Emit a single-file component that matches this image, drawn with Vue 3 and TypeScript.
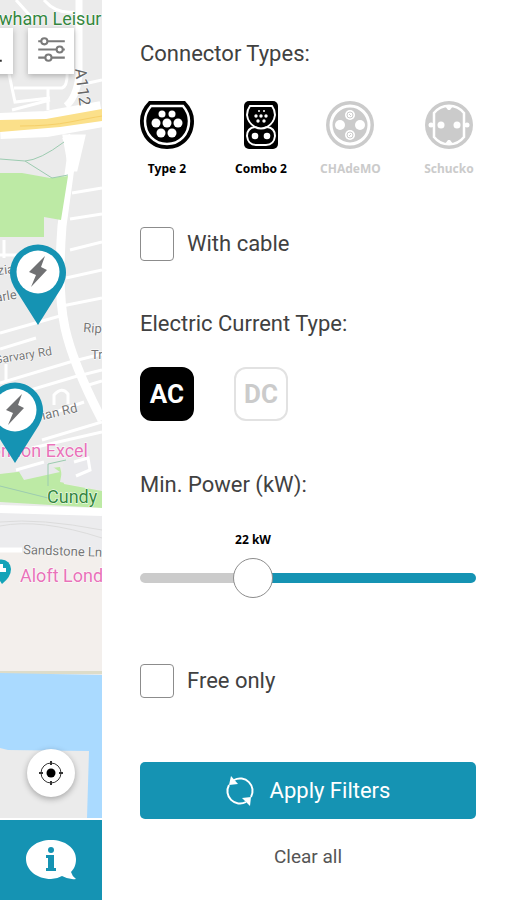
<script setup lang="ts">
import { computed, ref } from 'vue'

type Connector = 'type2' | 'combo2' | 'chademo' | 'schucko'
type Current = 'AC' | 'DC'

const connectors: { id: Connector; label: string }[] = [
  { id: 'type2', label: 'Type 2' },
  { id: 'combo2', label: 'Combo 2' },
  { id: 'chademo', label: 'CHAdeMO' },
  { id: 'schucko', label: 'Schucko' },
]
const currents: Current[] = ['AC', 'DC']

const activeConnectors = ref<Connector[]>(['type2', 'combo2'])
const activeCurrents = ref<Current[]>(['AC'])
const withCable = ref(false)
const freeOnly = ref(false)
const maxPower = 70
const power = ref(22)

const fraction = computed(() => power.value / maxPower)
const sliderVars = computed(() => ({ '--fraction': String(fraction.value) }))

function toggle<T>(list: T[], item: T): T[] {
  return list.includes(item) ? list.filter((entry) => entry !== item) : [...list, item]
}

function clearAll() {
  activeConnectors.value = []
  activeCurrents.value = []
  withCable.value = false
  freeOnly.value = false
  power.value = 0
}
</script>

<template>
  <div class="app">
    <div class="side">
      <div class="map">
        <svg class="map-art" viewBox="0 0 102 818" preserveAspectRatio="xMinYMin slice" aria-hidden="true">
          <rect width="102" height="818" fill="#ebebeb" />
          <g fill="none" stroke="#fff" stroke-width="3">
            <path d="M16 0L34 20M44 0Q56 14 74 12M9 74L15 102L50 98M14 88H62Q68 86 67 70M48 88V110M84 84L102 80M12 110L50 100" />
            <path d="M79 0V76Q76 98 66 106" stroke-width="7" />
            <path d="M0 126L46 124L102 114" stroke-width="26" />
            <path d="M66 136Q72 146 71 160L62 226Q57 292 65 328T102 420" stroke-width="9" />
            <path d="M64 136H84L76 170H70Z" fill="#fff" />
            <path d="M72 193L102 188M70 219L102 214M0 255H40M70 250L102 242M66 278L102 270M62 306L102 298M0 333L60 316M0 349L36 338M0 383L70 362L102 354M0 399L74 377L102 370M82 387L102 381M42 417L84 402M42 440L102 422M54 405V395Q62 386 68 394V404M4 240V258M6 364V380M32 448L102 432" />
          </g>
          <path d="M0 120L46 119L102 109V121L60 127L0 132Z" fill="#fbe08a" />
          <path d="M20 126Q50 126 70 122T102 116" fill="none" stroke="#f6cf68" />
          <path d="M0 173H22L50 178L68 176L61 220L44 217V237H0Z" fill="#bdeaa5" />
          <g fill="none" stroke="#9ccbb0">
            <path d="M0 159L25 161Q40 160 64 142M25 161L52 178L68 175" />
          </g>
          <path d="M0 474L60 467L64 484L102 491V508L0 502Z" fill="#bdeaa5" />
          <path d="M18 470L46 462L60 472L24 480Z" fill="#e9e9ec" />
          <path d="M64 460H102V490L60 482Z" fill="#e9e9ec" />
          <path d="M74 462L88 458L90 470L76 476M16 470L44 462" fill="none" stroke="#fff" stroke-width="3" />
          <path d="M0 486L48 498M48 464V486M48 464L66 460" fill="none" stroke="#9ccbb0" />
          <path d="M0 513H102V552H0Z" fill="#ececee" />
          <path d="M0 509L102 512" stroke="#fff" stroke-width="8" />
          <path d="M0 526Q40 518 102 538M0 522Q40 518 102 530" fill="none" stroke="#dcdcdc" />
          <path d="M0 552H102V671H0Z" fill="#f3efec" />
          <path d="M0 550H22" stroke="#fff" stroke-width="5" />
          <path d="M0 671H102V674H0Z" fill="#dddcc9" />
          <path d="M0 673L102 675V818H0Z" fill="#aadaff" />
          <path d="M0 748L8 750L89 751L87 818H0Z" fill="#ebebeb" />

          <g class="map-text">
            <text x="-1" y="25" class="park">wham Leisur</text>
            <text transform="translate(75 69) rotate(83)" class="road">A112</text>
            <text transform="translate(-2 275) rotate(-6)" class="street">zia</text>
            <text transform="translate(-4 302) rotate(-9)" class="street">arle</text>
            <text transform="translate(-5 364) rotate(-9)" class="street small">Garvary Rd</text>
            <text transform="translate(83 332) rotate(4)" class="street">Rip</text>
            <text x="91" y="359" class="street">Tr</text>
            <text transform="translate(43 420) rotate(-13)" class="street">ian Rd</text>
            <text x="88" y="457" text-anchor="end" class="place">London Excel</text>
            <text x="47" y="503" class="park">Cundy</text>
            <text transform="translate(23 554) rotate(2)" class="street">Sandstone Ln</text>
            <text x="20" y="582" class="place">Aloft Lond</text>
          </g>

          <path d="M-8 569A9.500 9.500 0 0 1 11 569Q11 577 2 584Z" fill="#13a3b8" />
          <path d="M0 564H3V568H6V572H0Z" fill="#fff" />

          <g v-for="[x, y] in [[38, 272], [15, 410]]" :key="y" :transform="`translate(${x} ${y})`">
            <path d="M0 53L-24 15A28 28 0 1 1 24 15Z" fill="#1593b3" />
            <circle r="21.500" fill="#fff" />
            <path d="M7 -16L-9 0L-2 3L-7 15L9 -2L3 -5Z" fill="#707173" />
          </g>
        </svg>

        <div class="map-tools">
          <button class="tool" type="button" aria-label="Search">
            <svg viewBox="0 0 45 45"><path d="M28 32H34" stroke="#333" stroke-width="2" /></svg>
          </button>
          <button class="tool" type="button" aria-label="Filters">
            <svg viewBox="0 0 45 45" fill="#fff" stroke="#7a7a7a" stroke-width="2">
              <path d="M10 13H36M10 21H36M10 29H36" />
              <circle cx="16" cy="13" r="3" />
              <circle cx="31" cy="21" r="3" />
              <circle cx="20" cy="29" r="3" />
            </svg>
          </button>
        </div>

        <button class="locate" type="button" aria-label="My location">
          <svg viewBox="0 0 26 26" fill="none" stroke="#333">
            <circle cx="13" cy="13" r="10" />
            <path d="M13 1V5M13 21V25M1 13H5M21 13H25" stroke-width="2" />
            <circle cx="13" cy="13" r="4.500" fill="#000" stroke="none" />
          </svg>
        </button>
      </div>

      <nav class="tabs">
        <button class="info" type="button" aria-label="Information">
          <svg viewBox="0 0 52 42">
            <path d="M26 1C40 1 51 9 51 20C51 26 49 30 46 33Q47 37 51 40Q44 41 37 37Q32 40 26 40C12 40 1 31 1 20S12 1 26 1Z" fill="#fff" />
            <circle cx="26" cy="11" r="3" fill="#1593b3" />
            <path d="M21 16H29V29H31V32H21V29H23V19H21Z" fill="#1593b3" />
          </svg>
        </button>
      </nav>
    </div>

    <form class="panel" @submit.prevent>
      <h2>Connector Types:</h2>
      <div class="connectors">
        <button
          v-for="item in connectors"
          :key="item.id"
          type="button"
          class="connector"
          :class="{ active: activeConnectors.includes(item.id) }"
          :aria-pressed="activeConnectors.includes(item.id)"
          @click="activeConnectors = toggle(activeConnectors, item.id)"
        >
          <svg v-if="item.id === 'type2'" width="54" height="48" viewBox="0 0 54 48" fill="currentColor">
            <path d="M9 0H45Q54 9 54 20C54 36 43 48 27 48S0 36 0 20Q0 9 9 0Z" />
            <path d="M11 5H43Q49 12 49 20C49 33 40 43 27 43S5 33 5 20Q5 12 11 5Z" fill="none" stroke="#fff" stroke-width="2.500" />
            <g fill="#fff">
              <circle cx="22" cy="13" r="3.500" /><circle cx="32" cy="13" r="3.500" />
              <circle cx="16" cy="22" r="4.500" /><circle cx="27" cy="22" r="4.500" /><circle cx="38" cy="22" r="4.500" />
              <circle cx="21" cy="32" r="4.500" /><circle cx="32" cy="32" r="4.500" />
            </g>
          </svg>
          <svg v-else-if="item.id === 'combo2'" width="34" height="48" viewBox="0 0 34 48" fill="currentColor">
            <rect width="34" height="48" rx="5" />
            <g fill="none" stroke="#fff" stroke-width="2">
              <path d="M6 5H28Q31 9 31 14Q30 22 23 26Q31 27 31 35Q30 44 22 44H12Q4 44 3 35Q3 27 11 26Q4 22 3 14Q3 9 6 5Z" />
              <path d="M11 26Q17 29 23 26" />
            </g>
            <g fill="#fff">
              <circle cx="15" cy="10" r="1" /><circle cx="20" cy="10" r="1" />
              <circle cx="12" cy="15" r="1.700" /><circle cx="17" cy="15" r="1.700" /><circle cx="22" cy="15" r="1.700" />
              <circle cx="14" cy="20" r="1.700" /><circle cx="20" cy="20" r="1.700" />
              <circle cx="11" cy="35" r="3.300" /><circle cx="23" cy="35" r="3.300" />
            </g>
          </svg>
          <svg v-else-if="item.id === 'chademo'" width="48" height="48" viewBox="0 0 48 48" fill="currentColor">
            <circle cx="24" cy="24" r="24" />
            <circle cx="24" cy="24" r="19" fill="none" stroke="#fff" stroke-width="3" />
            <g fill="#fff">
              <circle cx="14" cy="24" r="5" /><circle cx="34" cy="24" r="5" />
              <circle cx="24" cy="14" r="5" /><circle cx="24" cy="34" r="5" />
            </g>
            <g fill="none" stroke="currentColor">
              <circle cx="24" cy="14" r="3" /><circle cx="24" cy="34" r="3" />
              <path d="M23 13L25 15M23 35L25 33" />
            </g>
          </svg>
          <svg v-else width="48" height="48" viewBox="0 0 48 48" fill="currentColor">
            <circle cx="24" cy="24" r="24" />
            <path d="M9 12A19 19 0 0 1 39 12V36A19 19 0 0 1 9 36Z" fill="none" stroke="#fff" stroke-width="2.500" />
            <g fill="#fff">
              <circle cx="16" cy="24" r="3.500" /><circle cx="32" cy="24" r="3.500" />
              <circle cx="6" cy="24" r="2.500" /><circle cx="42" cy="24" r="2.500" />
              <path d="M20 5H28L25 9H23ZM20 43H28L25 39H23Z" />
            </g>
          </svg>
          <span>{{ item.label }}</span>
        </button>
      </div>

      <label class="check cable">
        <input v-model="withCable" type="checkbox" />
        <span>With cable</span>
      </label>

      <h2>Electric Current Type:</h2>
      <div class="currents">
        <button
          v-for="kind in currents"
          :key="kind"
          type="button"
          class="current"
          :class="{ active: activeCurrents.includes(kind) }"
          :aria-pressed="activeCurrents.includes(kind)"
          @click="activeCurrents = toggle(activeCurrents, kind)"
        >
          {{ kind }}
        </button>
      </div>

      <h2><label for="power">Min. Power (kW):</label></h2>
      <div class="slider" :style="sliderVars">
        <output for="power"><span>{{ power }} kW</span></output>
        <input id="power" v-model.number="power" type="range" min="0" :max="maxPower" />
      </div>

      <label class="check free">
        <input v-model="freeOnly" type="checkbox" />
        <span>Free only</span>
      </label>

      <button class="apply" type="submit">
        <svg viewBox="0 0 28 28" fill="none" stroke="#fff" stroke-width="2">
          <path d="M8 3A12.500 12.500 0 0 1 25 20M20 25A12.500 12.500 0 0 1 3 8" />
          <path d="M5 -1L3 8L12 7ZM16 21L25 20L24 29Z" fill="#fff" stroke="none" />
        </svg>
        <span>Apply Filters</span>
      </button>
      <button class="clear" type="button" @click="clearAll">Clear all</button>
    </form>
  </div>
</template>

<style>
body {
  margin: 0;
  background: #fff;
}
</style>

<style scoped>
.app {
  display: flex;
  min-height: 100vh;
  font-family: Roboto, sans-serif;
  color: #414141;
}

button {
  padding: 0;
  border: 0;
  font-family: inherit;
  cursor: pointer;
}

svg {
  display: block;
}

.side {
  display: flex;
  flex: 0 0 102px;
  flex-direction: column;
}

.map {
  position: relative;
  flex: 1;
  overflow: hidden;
}

.map-art {
  position: absolute;
  width: 100%;
  height: 100%;
}

.park {
  fill: #35873f;
  font-size: 18px;
}

.place {
  fill: #e973b9;
  font-size: 18px;
}

.road {
  fill: #666;
  font-size: 16px;
}

.street {
  fill: #777;
  font-size: 13px;
}

.street.small {
  font-size: 12px;
}

.map-text text {
  paint-order: stroke;
  stroke: #fff;
  stroke-width: 1px;
}

.map-tools {
  position: absolute;
  top: 28px;
  right: 28px;
  display: flex;
  gap: 15px;
}

.tool {
  width: 46px;
  height: 46px;
  background: #fff;
  box-shadow: 0 2px 6px rgba(0, 0, 0, 0.25);
}

.locate {
  position: absolute;
  right: 27px;
  bottom: 21px;
  display: grid;
  place-items: center;
  width: 48px;
  height: 48px;
  border-radius: 50%;
  background: #fff;
  box-shadow: 0 2px 6px rgba(0, 0, 0, 0.3);
}

.locate svg {
  width: 26px;
}

.tabs {
  display: grid;
  place-items: center;
  height: 80px;
  border-top: 2px solid #fff;
  background: #1593b3;
}

.info {
  background: none;
}

.info svg {
  width: 52px;
}

.panel {
  display: flex;
  flex: 1;
  flex-direction: column;
  min-width: 0;
  padding: 41px 30px 28px 38px;
  background: #fff;
}

h2 {
  margin: 0;
  font-size: 22px;
  font-weight: 400;
  line-height: 26px;
}

.connectors {
  display: grid;
  grid-template-columns: 94fr 86fr 102fr 54px;
  justify-items: start;
  margin-top: 34px;
}

.connector {
  display: flex;
  flex-direction: column;
  align-items: center;
  gap: 12px;
  min-width: 54px;
  background: none;
  color: #cbcbcb;
  font-family: "Noto Sans", sans-serif;
  font-size: 12px;
  font-weight: 700;
  line-height: 16px;
  white-space: nowrap;
}

.connector.active {
  color: #000;
}

.check {
  display: flex;
  align-items: center;
  gap: 13px;
  font-size: 22px;
  line-height: 34px;
}

.check input {
  appearance: none;
  width: 34px;
  height: 34px;
  margin: 0;
  border: 1px solid #8c8c8c;
  border-radius: 4px;
  background: #fff;
}

.check input:checked {
  background: #1593b3;
}

.cable {
  margin: 50px 0;
}

.currents {
  display: flex;
  gap: 40px;
  margin: 30px 0 51px;
}

.current {
  box-sizing: border-box;
  width: 54px;
  height: 54px;
  border: 2px solid #e2e2e2;
  border-radius: 12px;
  background: #fff;
  color: #cbcbcb;
  font-size: 26px;
  font-weight: 700;
}

.current.active {
  border-color: #000;
  background: #000;
  color: #fff;
}

.slider {
  margin-top: 34px;
}

.slider output {
  display: flex;
  width: 40px;
  justify-content: center;
  margin-left: calc((100% - 40px) * var(--fraction));
  color: #000;
  font-family: "Noto Sans", sans-serif;
  font-size: 12px;
  font-weight: 700;
  line-height: 16px;
  white-space: nowrap;
}

.slider input {
  display: block;
  appearance: none;
  width: 100%;
  height: 40px;
  margin: 10px 0 0;
  background: none;
}

.slider input::-webkit-slider-runnable-track {
  height: 10px;
  border-radius: 5px;
  background: linear-gradient(to right, #cbcbcb calc(var(--fraction) * (100% - 40px) + 20px), #1593b3 0);
}

.slider input::-webkit-slider-thumb {
  appearance: none;
  box-sizing: border-box;
  width: 40px;
  height: 40px;
  margin-top: -15px;
  border: 1px solid #8c8c8c;
  border-radius: 50%;
  background: #fff;
}

.free {
  margin: 66px 0 64px;
}

.apply {
  display: flex;
  align-items: center;
  justify-content: center;
  gap: 16px;
  height: 57px;
  border-radius: 5px;
  background: #1593b3;
  color: #fff;
  font-size: 22px;
}

.apply svg {
  width: 28px;
  overflow: visible;
}

.clear {
  align-self: center;
  margin-top: 24px;
  background: none;
  color: #555;
  font-size: 19px;
  line-height: 28px;
}
</style>
